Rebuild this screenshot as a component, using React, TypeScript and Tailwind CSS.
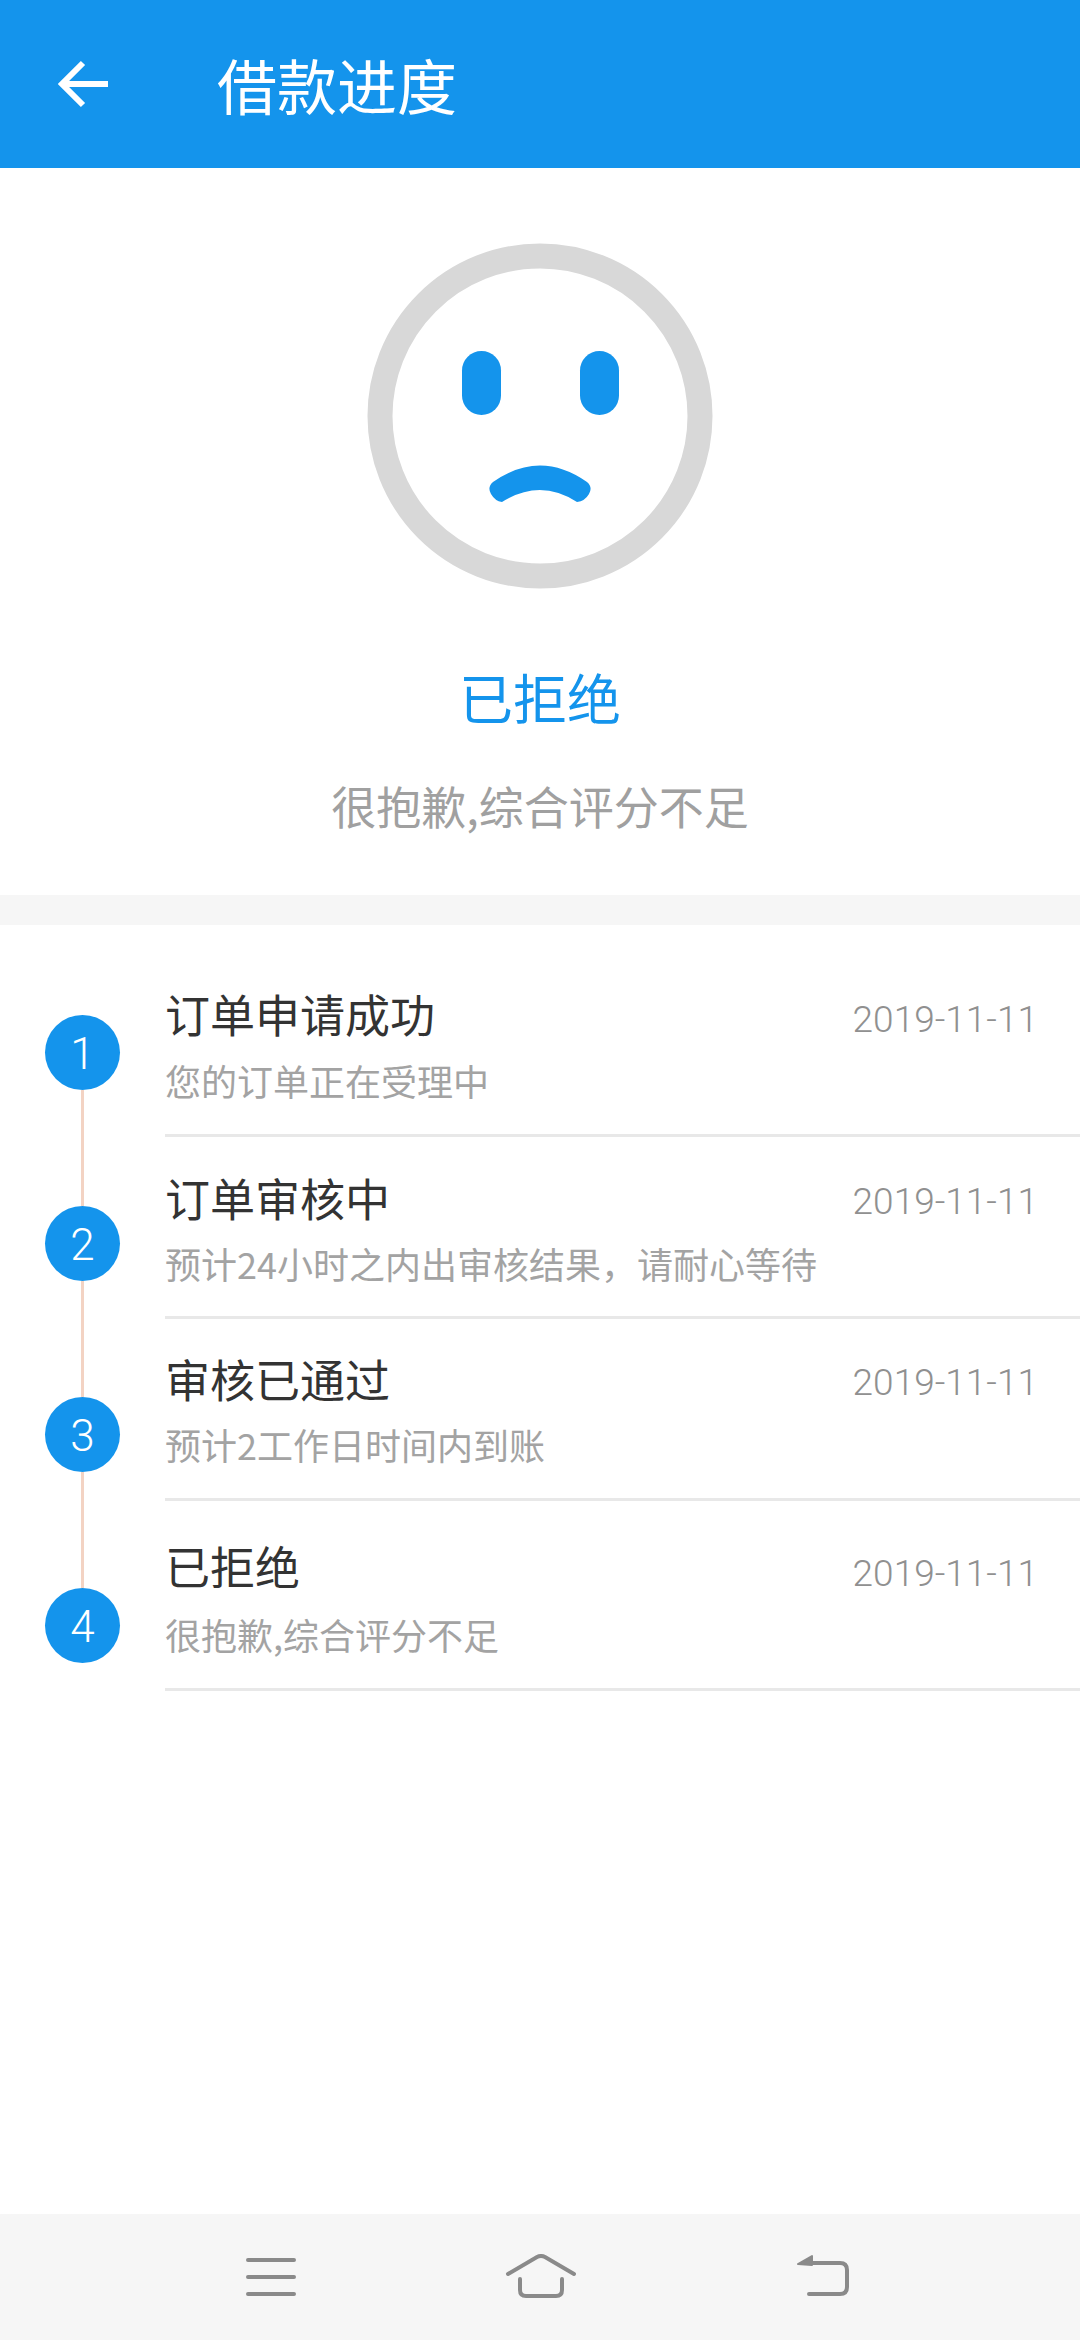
const cjk = "font-['Noto_Sans_CJK_SC','Roboto',sans-serif]";

type Row = { title: string; sub: string; date: string; pt: string; subMt: string; pb: string; dateMt: string };

const rows: Row[] = [
  { title: "订单申请成功", sub: "您的订单正在受理中", date: "2019-11-11", pt: "pt-[57px]", subMt: "mt-[8px]", pb: "pb-[28px]", dateMt: "mt-[12px]" },
  { title: "订单审核中", sub: "预计24小时之内出审核结果，请耐心等待", date: "2019-11-11", pt: "pt-[29px]", subMt: "mt-[7px]", pb: "pb-[27px]", dateMt: "mt-[10px]" },
  { title: "审核已通过", sub: "预计2工作日时间内到账", date: "2019-11-11", pt: "pt-[28px]", subMt: "mt-[7px]", pb: "pb-[28px]", dateMt: "mt-[10px]" },
  { title: "已拒绝", sub: "很抱歉,综合评分不足", date: "2019-11-11", pt: "pt-[33px]", subMt: "mt-[10px]", pb: "pb-[28px]", dateMt: "mt-[14px]" },
];

function Face() {
  return (
    <svg width="346" height="346" viewBox="0 0 346 346" className="block">
      <circle cx="173" cy="173" r="160" fill="none" stroke="#d8d8d8" strokeWidth="25" />
      <rect x="95" y="108" width="39" height="64" rx="19.5" fill="#1494ec" />
      <rect x="213" y="108" width="39" height="64" rx="19.5" fill="#1494ec" />
      <path
        d="M126 239 Q173 206 220 239 Q226 244 222 251 Q218 258 210 259 Q173 235 135 259 Q128 258 124 251 Q120 244 126 239 Z"
        fill="#1494ec"
      />
    </svg>
  );
}

function Step({ n, line }: { n: number; line: boolean }) {
  return (
    <div className="flex flex-col items-center">
      <div className="flex h-[75px] w-[75px] items-center justify-center rounded-full bg-[#1494ec] pt-[2px] font-['Roboto',sans-serif] text-[44px] font-light leading-none text-white">
        {n}
      </div>
      {line && <div className="h-[116px] w-[3px] bg-[#f3d3c3]" />}
    </div>
  );
}

export default function App() {
  return (
    <div className={`flex h-[2340px] w-[1080px] flex-col bg-white ${cjk}`}>
      <header className="flex h-[168px] shrink-0 items-center bg-[#1494ec] pl-[58px] text-white">
        <svg width="52" height="52" viewBox="0 0 52 52" className="block">
          <path d="M4 26 H50 M25 5 L4 26 L25 47" fill="none" stroke="#fff" strokeWidth="6" />
        </svg>
        <h1 className="ml-[107px] text-[60px] font-normal leading-none">借款进度</h1>
      </header>

      <section className="flex h-[727px] shrink-0 flex-col items-center pt-[75px]">
        <Face />
        <div className="mt-[72px] text-[54px] leading-[72px] text-[#1494ec]">已拒绝</div>
        <div className="mt-[44px] text-[45px] leading-[58px] text-[#a0a0a0]">很抱歉,综合评分不足</div>
      </section>

      <div className="h-[30px] shrink-0 bg-[#f6f6f6]" />

      <section className="flex shrink-0">
        <div className="w-[165px] shrink-0 pl-[45px] pt-[90px]">
          <div className="flex w-[75px] flex-col">
            {[1, 2, 3, 4].map((n) => (
              <Step key={n} n={n} line={n < 4} />
            ))}
          </div>
        </div>
        <div className="min-w-0 flex-1">
          {rows.map((r) => (
            <div key={r.title} className={`flex justify-between border-b-[3px] border-[#e8e8e8] pr-[42px] ${r.pt} ${r.pb}`}>
              <div>
                <div className="text-[45px] leading-[64px] text-[#333333]">{r.title}</div>
                <div className={`text-[36px] leading-[52px] text-[#a3a3a3] ${r.subMt}`}>{r.sub}</div>
              </div>
              <div className={`font-['Roboto',sans-serif] text-[37px] font-light leading-[52px] text-[#909090] ${r.dateMt}`}>
                {r.date}
              </div>
            </div>
          ))}
        </div>
      </section>

      <nav className="mt-auto flex h-[126px] shrink-0 items-center bg-[#f6f6f6] pl-[244px]">
        <svg width="54" height="40" viewBox="0 0 54 40" className="block">
          <path d="M4 3 H50 M4 20 H50 M4 37 H50" fill="none" stroke="#8a8a8a" strokeWidth="4" strokeLinecap="round" />
        </svg>
        <svg width="74" height="46" viewBox="0 0 74 46" className="ml-[206px] block">
          <path d="M4 20 L33 3 Q37 1 41 3 L70 20" fill="none" stroke="#8a8a8a" strokeWidth="4" strokeLinecap="round" />
          <path d="M16 25 V36 Q16 42 22 42 H52 Q58 42 58 36 V25" fill="none" stroke="#8a8a8a" strokeWidth="4" strokeLinecap="round" />
        </svg>
        <svg width="58" height="46" viewBox="0 0 58 46" className="ml-[216px] block">
          <path d="M4 10 L18 2 V11 Z" fill="#8a8a8a" stroke="#8a8a8a" strokeWidth="2" strokeLinejoin="round" />
          <path d="M12 9 H46 Q53 9 53 16 V33 Q53 40 46 40 H15" fill="none" stroke="#8a8a8a" strokeWidth="4" strokeLinecap="round" />
        </svg>
      </nav>
    </div>
  );
}
